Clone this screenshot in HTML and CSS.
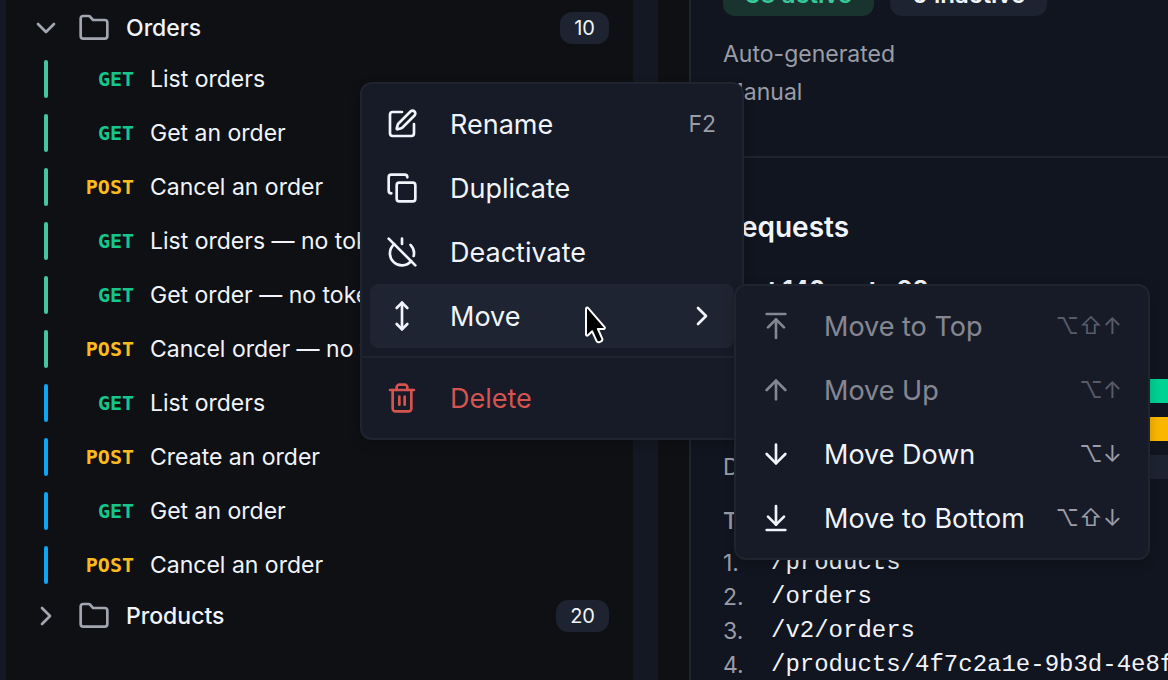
FILE: index.html
```html
<!DOCTYPE html>
<html lang="en">
<head>
    <meta charset="UTF-8">
    <title>Orders</title>
    <link rel="stylesheet" href="styles.css">
</head>
<body>
    <svg class="sprite" aria-hidden="true">
        <symbol id="chevron-down" viewBox="0 0 24 24"><path d="m6 9 6 6 6-6"/></symbol>
        <symbol id="chevron-right" viewBox="0 0 24 24"><path d="m9 18 6-6-6-6"/></symbol>
        <symbol id="folder" viewBox="0 0 24 24"><path d="M20 20a2 2 0 0 0 2-2V8a2 2 0 0 0-2-2h-7.900a2 2 0 0 1-1.400-.6L9.200 3.600A2 2 0 0 0 7.800 3H4a2 2 0 0 0-2 2v13a2 2 0 0 0 2 2Z"/></symbol>
        <symbol id="pen" viewBox="0 0 24 24"><path d="M12 3H5a2 2 0 0 0-2 2v14a2 2 0 0 0 2 2h14a2 2 0 0 0 2-2v-7"/><path d="M18.375 2.625a1 1 0 0 1 3 3l-9.013 9.014a2 2 0 0 1-.853.505l-2.873.84a.5.5 0 0 1-.62-.62l.84-2.873a2 2 0 0 1 .506-.852z"/></symbol>
        <symbol id="copy" viewBox="0 0 24 24"><rect x="8" y="8" width="14" height="14" rx="2"/><path d="M4 16c-1.1 0-2-.9-2-2V4c0-1.1.9-2 2-2h10c1.1 0 2 .9 2 2"/></symbol>
        <symbol id="power-off" viewBox="0 0 24 24"><path d="M18.36 6.64A9 9 0 0 1 20.77 15"/><path d="M6.16 6.16a9 9 0 1 0 12.68 12.68"/><path d="M12 2v4"/><path d="m2 2 20 20"/></symbol>
        <symbol id="move" viewBox="0 0 24 24"><path d="M12 2v20"/><path d="m8 18 4 4 4-4"/><path d="m8 6 4-4 4 4"/></symbol>
        <symbol id="trash" viewBox="0 0 24 24"><path d="M3 6h18"/><path d="M19 6v14c0 1-1 2-2 2H7c-1 0-2-1-2-2V6"/><path d="M8 6V4c0-1 1-2 2-2h4c1 0 2 1 2 2v2"/><path d="M10 11v6"/><path d="M14 11v6"/></symbol>
        <symbol id="to-top" viewBox="0 0 24 24"><path d="M5 3h14"/><path d="m18 13-6-6-6 6"/><path d="M12 7v14"/></symbol>
        <symbol id="up" viewBox="0 0 24 24"><path d="m5 12 7-7 7 7"/><path d="M12 19V5"/></symbol>
        <symbol id="down" viewBox="0 0 24 24"><path d="M12 5v14"/><path d="m19 12-7 7-7-7"/></symbol>
        <symbol id="to-bottom" viewBox="0 0 24 24"><path d="M12 17V3"/><path d="m6 11 6 6 6-6"/><path d="M19 21H5"/></symbol>
    </svg>

    <div class="app">
        <nav class="sidebar">
            <button class="folder">
                <svg class="icon"><use href="#chevron-down"/></svg>
                <svg class="icon"><use href="#folder"/></svg>
                <span class="folder-name">Orders</span>
                <span class="count">10</span>
            </button>
            <a class="request" href="#"><span class="method get">GET</span><span>List orders</span></a>
            <a class="request" href="#"><span class="method get">GET</span><span>Get an order</span></a>
            <a class="request" href="#"><span class="method post">POST</span><span>Cancel an order</span></a>
            <a class="request" href="#"><span class="method get">GET</span><span>List orders — no token</span></a>
            <a class="request" href="#"><span class="method get">GET</span><span>Get order — no token</span></a>
            <a class="request" href="#"><span class="method post">POST</span><span>Cancel order — no token</span></a>
            <a class="request manual" href="#"><span class="method get">GET</span><span>List orders</span></a>
            <a class="request manual" href="#"><span class="method post">POST</span><span>Create an order</span></a>
            <a class="request manual" href="#"><span class="method get">GET</span><span>Get an order</span></a>
            <a class="request manual" href="#"><span class="method post">POST</span><span>Cancel an order</span></a>
            <button class="folder">
                <svg class="icon"><use href="#chevron-right"/></svg>
                <svg class="icon"><use href="#folder"/></svg>
                <span class="folder-name">Products</span>
                <span class="count">20</span>
            </button>
        </nav>

        <main class="details">
            <section class="summary">
                <div class="pills">
                    <span class="pill active">38 active</span>
                    <span class="pill">0 inactive</span>
                </div>
                <div class="line">Auto-generated</div>
                <div class="line">Manual</div>
            </section>
            <section class="requests">
                <h2>Requests</h2>
                <div class="totals"><span>Sent 140</span><span>rate 98</span></div>
                <div class="chart">
                    <span>GET</span><div class="bar bar-get"></div>
                    <span>POST</span><div class="bar bar-post"></div>
                    <span>DELETE</span><div class="bar"></div>
                </div>
                <h3>Top</h3>
                <ol class="paths">
                    <li>/products</li>
                    <li>/orders</li>
                    <li>/v2/orders</li>
                    <li>/products/4f7c2a1e-9b3d-4e8f</li>
                </ol>
            </section>
        </main>
    </div>

    <div class="menu context-menu">
        <button class="item"><svg class="icon"><use href="#pen"/></svg><span>Rename</span><kbd>F2</kbd></button>
        <button class="item"><svg class="icon"><use href="#copy"/></svg><span>Duplicate</span></button>
        <button class="item"><svg class="icon"><use href="#power-off"/></svg><span>Deactivate</span></button>
        <div class="submenu-wrap">
            <button class="item current"><svg class="icon"><use href="#move"/></svg><span>Move</span><svg class="icon"><use href="#chevron-right"/></svg></button>
            <div class="menu submenu">
                <button class="item" disabled><svg class="icon"><use href="#to-top"/></svg><span>Move to Top</span><kbd>⌥⇧↑</kbd></button>
                <button class="item" disabled><svg class="icon"><use href="#up"/></svg><span>Move Up</span><kbd>⌥↑</kbd></button>
                <button class="item"><svg class="icon"><use href="#down"/></svg><span>Move Down</span><kbd>⌥↓</kbd></button>
                <button class="item"><svg class="icon"><use href="#to-bottom"/></svg><span>Move to Bottom</span><kbd>⌥⇧↓</kbd></button>
            </div>
        </div>
        <hr>
        <button class="item danger"><svg class="icon"><use href="#trash"/></svg><span>Delete</span></button>
    </div>

    <svg class="pointer" viewBox="0 0 24 38"><path d="M2 3v25.500c0 1.200 1.200 1.600 2 .8l4.200-4 4.300 9.600c.6 1.300 1.700 1.700 3 1.200l1.600-.8c1.200-.6 1.500-1.700 1-2.900l-4.200-9.400h5.600c1.300 0 1.800-1.200.9-2.100L4 1.900C3.200 1.100 2 1.700 2 3z"/></svg>
</body>
</html>
```
FILE: styles.css
```css
* {
    box-sizing: border-box;
}
body {
    margin: 0;
    height: 100vh;
    overflow: hidden;
    background-color: #0e1014;
    color: #f1f4fa;
    font-family: Inter, "Liberation Sans", sans-serif;
    font-size: 23px;
}
button {
    border: none;
    background: none;
    color: inherit;
    font: inherit;
    text-align: left;
}
.sprite {
    display: none;
}
.icon {
    width: 32px;
    height: 32px;
    flex: none;
    fill: none;
    stroke: currentColor;
    stroke-width: 2;
    stroke-linecap: round;
    stroke-linejoin: round;
}
.app {
    display: flex;
    height: 100%;
}

/* sidebar */
.sidebar {
    flex: 0 0 658px;
    padding-top: 4px;
    border-left: 6px solid #131823;
    border-right: 25px solid #141822;
}
.folder {
    display: flex;
    align-items: center;
    gap: 16px;
    width: 100%;
    height: 48px;
    padding: 0 24px;
    font-weight: 500;
}
.folder .icon {
    color: #a3a6b1;
}
.folder-name {
    flex: 1;
}
.count {
    height: 32px;
    padding: 0 14px;
    border-radius: 12px;
    background-color: #1d2331;
    font-size: 20px;
    font-weight: 400;
    line-height: 32px;
}
.request {
    display: flex;
    align-items: center;
    height: 54px;
    padding-left: 38px;
    color: inherit;
    line-height: 26px;
    text-decoration: none;
}
.request::before {
    content: "";
    width: 4px;
    height: 38px;
    border-radius: 2px;
    background-color: #46c5a0;
}
.request.manual::before {
    background-color: #10a4f4;
}
.method {
    width: 86px;
    margin-right: 16px;
    font-family: "DejaVu Sans Mono", monospace;
    font-size: 20px;
    font-weight: 700;
    text-align: right;
}
.get {
    color: #14c78c;
}
.post {
    color: #fbbb1c;
}

/* details */
.details {
    flex: 1;
    min-width: 0;
    margin-left: 31px;
    border-left: 2px solid #20242f;
    background-color: #11151f;
    overflow: hidden;
}
.summary {
    margin-top: -24px;
    padding: 0 0 45px 32px;
    border-bottom: 2px solid #20242f;
    color: #9a9da8;
}
.pills {
    display: flex;
    gap: 16px;
    margin-bottom: 19px;
}
.pill {
    height: 40px;
    padding: 0 22px;
    border-radius: 12px;
    background-color: #1d2331;
    color: #f1f4fa;
    font-size: 24px;
    font-weight: 600;
    line-height: 38px;
}
.pill.active {
    background-color: #19332f;
    color: #36c99a;
}
.line {
    line-height: 38px;
}
.requests {
    padding: 49px 0 0 32px;
}
h2 {
    margin: 0;
    font-size: 28px;
    font-weight: 600;
    line-height: 40px;
}
.totals {
    display: flex;
    gap: 20px;
    margin: 27px 0 66px;
    font-size: 24px;
    font-weight: 700;
    line-height: 32px;
}
.chart {
    display: grid;
    grid-template-columns: 128px 1fr;
    align-items: center;
    color: #9a9da8;
    line-height: 38px;
}
.bar {
    height: 24px;
    background-color: #1d2331;
}
.bar-get {
    background-color: #00d294;
}
.bar-post {
    background-color: #fbb600;
}
h3 {
    margin: 16px 0 6px;
    color: #9a9da8;
    font-size: 23px;
    font-weight: 500;
    line-height: 38px;
}
.paths {
    margin: 0;
    padding: 0;
    list-style: none;
    counter-reset: path;
}
.paths li {
    display: flex;
    counter-increment: path;
    font-family: "Liberation Mono", monospace;
    font-size: 24px;
    line-height: 34px;
    white-space: nowrap;
}
.paths li::before {
    content: counter(path) ".";
    flex: 0 0 48px;
    color: #9a9da8;
    font-family: Inter, sans-serif;
    font-size: 23px;
}

/* menus */
.menu {
    position: absolute;
    padding: 8px;
    border: 2px solid #20242f;
    border-radius: 12px;
    background-color: #171a27;
    box-shadow: 0 4px 12px rgba(0, 0, 0, 0.2);
    font-size: 27px;
}
.context-menu {
    top: 82px;
    left: 360px;
    width: 384px;
}
.submenu-wrap {
    position: relative;
}
.submenu {
    top: 0;
    left: 100%;
    width: 416px;
}
.item {
    display: flex;
    align-items: center;
    width: 100%;
    height: 64px;
    padding: 0 16px;
    border-radius: 8px;
    white-space: nowrap;
}
.item span {
    flex: 1;
    margin-left: 32px;
}
.item.current {
    background-color: #1e2431;
}
.item:disabled {
    opacity: 0.5;
}
.item.danger {
    color: #d6544f;
}
.item kbd {
    margin-right: 2px;
    color: #9a9da8;
    font-family: Inter, "DejaVu Sans", sans-serif;
    font-size: 23px;
}
hr {
    height: 2px;
    margin: 8px -8px;
    border: none;
    background-color: #20242f;
}
.pointer {
    position: absolute;
    top: 306px;
    left: 584px;
    width: 24px;
    height: 38px;
    fill: #000;
    stroke: #fff;
    stroke-width: 2;
    stroke-linejoin: round;
}
```
